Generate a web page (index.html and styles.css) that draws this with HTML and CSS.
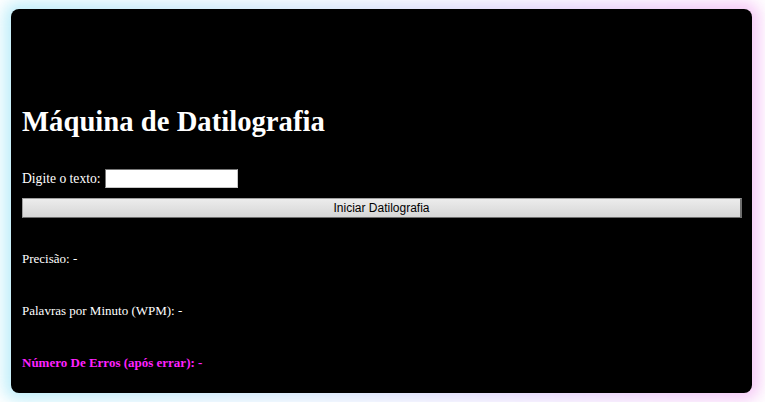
FILE: index.html
```html
<!DOCTYPE html>
<html lang="pt">
<head>
<meta charset="utf-8">
<link rel="stylesheet" href="styles.css">
</head>
<body>
<div class="stage">
  <div class="glow"></div>
  <main class="panel">
    <h1 class="title">Máquina de Datilografia</h1>
    <div class="field">
      <label class="label" for="txt">Digite o texto:</label>
      <input id="txt" class="input" type="text">
    </div>
    <button class="btn">Iniciar Datilografia</button>
    <p class="stat first">Precisão: -</p>
    <p class="stat">Palavras por Minuto (WPM): -</p>
    <p class="stat errors">Número De Erros (após errar): -</p>
  </main>
</div>
</body>
</html>
```
FILE: styles.css
```css
html, body {
  margin: 0;
  padding: 0;
  background: #ffffff;
  width: 765px;
  height: 402px;
  overflow: hidden;
}
.stage {
  position: relative;
  padding: 9px 13px 9px 11px;
  box-sizing: border-box;
  height: 402px;
}
.glow {
  position: absolute;
  left: 4px;
  right: 6px;
  top: 2px;
  bottom: 2px;
  border-radius: 14px;
  background: linear-gradient(90deg, #bdeefa 0%, #d6e8fb 40%, #e3d6fb 70%, #f6c6f6 100%);
  filter: blur(8px);
}
.panel {
  position: relative;
  background: #000;
  color: #fff;
  border-radius: 8px;
  height: 384px;
  box-sizing: border-box;
  padding: 92px 10px 0 11px;
  font-family: "Liberation Serif", "Times New Roman", serif;
  font-size: 13px;
}
.title {
  margin: 0 0 28px 0;
  font-size: 28.7px;
  font-weight: bold;
  line-height: 40px;
}
.field {
  display: flex;
  align-items: center;
  gap: 4px;
  height: 19px;
}
.label {
  font-size: 13.6px;
}
.input {
  width: 133px;
  height: 19px;
  box-sizing: border-box;
  margin: 0;
  border: 1px solid #767676;
  border-right-color: #c8c8c8;
  border-bottom-color: #c8c8c8;
  background: #fff;
  padding: 0 2px;
}
.btn {
  display: block;
  width: 100%;
  height: 20px;
  margin: 10px 0 0 0;
  box-sizing: border-box;
  border: 1px solid #a0a0a0;
  border-right-color: #6e6e6e;
  border-bottom-color: #6e6e6e;
  border-right-width: 2px;
  background: linear-gradient(#ececec, #d6d6d6);
  font-family: "Liberation Sans", Arial, sans-serif;
  font-size: 12px;
  color: #000;
  padding: 0;
}
.stat {
  margin: 34px 0 0 0;
  line-height: 18px;
}
.stat.first {
  margin-top: 32px;
}
.errors {
  color: #ff22ff;
  font-weight: bold;
}
```
